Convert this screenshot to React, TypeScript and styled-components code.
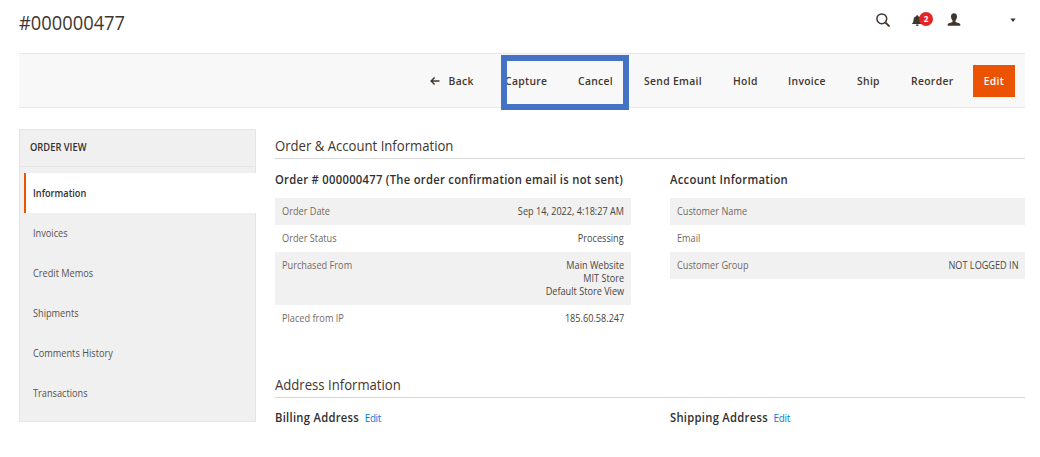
import React from "react";
import styled, { createGlobalStyle } from "styled-components";

const Global = createGlobalStyle`
  * { box-sizing: border-box; }
  body { margin: 0; background: #fff; color: #41362f; font-family: "Open Sans", sans-serif; font-size: 10px; }
  h1, h2, h3, dl, dd, dt { margin: 0; }
`;

const Page = styled.div`
  width: 1040px;
  height: 457px;
  padding: 0 15px 0 19px;
  overflow: hidden;
  white-space: nowrap;
`;

/* Horizontally condensed run of text, anchored at the given edge. */
const Condensed = styled.span<{ $by: number; $from?: string }>`
  display: inline-block;
  transform: scaleX(${(p) => p.$by});
  transform-origin: ${(p) => p.$from ?? "left"} center;
`;

const Header = styled.header`
  display: flex;
  justify-content: space-between;
  height: 53px;
`;

const Title = styled.h1`
  padding-top: 8px;
  font-size: 20.5px;
  line-height: 28px;
  font-weight: 400;
`;

const Tools = styled.div`
  display: flex;
  padding-top: 13px;
  width: 149px;
  svg { display: block; }
`;

const ToolIcon = styled.div<{ $gap: number }>`
  position: relative;
  width: 14px;
  height: 14px;
  margin-right: ${(p) => p.$gap}px;
`;

const Count = styled.span`
  position: absolute;
  left: 8px;
  top: -1px;
  width: 14px;
  height: 14px;
  border-radius: 7px;
  background: #e22626;
  color: #fff;
  font-size: 8px;
  line-height: 14px;
  font-weight: 700;
  text-align: center;
`;

const Toolbar = styled.div`
  position: relative;
  display: flex;
  align-items: center;
  justify-content: flex-end;
  height: 55px;
  padding-right: 10px;
  background: #f8f8f8;
  border-top: 1px solid #e9e9e9;
  border-bottom: 1px solid #e9e9e9;
`;

const Action = styled.button<{ $w: number }>`
  display: flex;
  align-items: center;
  justify-content: space-between;
  width: ${(p) => p.$w}px;
  margin: 0 31px 0 0;
  padding: 0;
  border: 0;
  background: none;
  position: relative;
  color: #41362f;
  font: 600 11px/16px "Open Sans", sans-serif;
  letter-spacing: 0.35px;
  white-space: nowrap;
`;

const Primary = styled(Action)`
  justify-content: center;
  height: 32px;
  margin: 0 0 0 -11px;
  background: #eb5202;
  color: #fff;
`;

const Highlight = styled.div`
  position: absolute;
  left: 482px;
  top: 1px;
  width: 128px;
  height: 55px;
  border: 6px solid #4472c4;
`;

const Body = styled.div`
  display: flex;
  gap: 19px;
  padding-top: 21px;
`;

const Side = styled.nav`
  width: 237px;
  height: 293px;
  background: #f0f0f0;
  border: 1px solid #e5e5e5;
`;

const SideTitle = styled.div`
  height: 37px;
  padding-left: 10px;
  border-bottom: 1px solid #e6e6e6;
  margin-bottom: 6px;
  color: #303030;
  font-size: 10.5px;
  line-height: 35px;
  font-weight: 600;
`;

const SideItem = styled.a<{ $active?: boolean }>`
  display: block;
  height: 40px;
  margin: 0 -1px 0 4px;
  padding-left: ${(p) => (p.$active ? 7 : 9)}px;
  border-left: ${(p) => (p.$active ? "2px solid #eb5202" : "0")};
  background: ${(p) => (p.$active ? "#fff" : "transparent")};
  color: ${(p) => (p.$active ? "#303030" : "#55504c")};
  font-weight: ${(p) => (p.$active ? 600 : 400)};
  font-size: 10.5px;
  line-height: 40px;
`;

const Main = styled.main`
  width: 750px;
`;

const Section = styled.section<{ $h: number }>`
  height: ${(p) => p.$h}px;
`;

const SectionTitle = styled.h2`
  height: 30px;
  padding-top: 6px;
  border-bottom: 1px solid #d6d6d6;
  font-size: 14.5px;
  line-height: 22px;
  font-weight: 400;
`;

const Columns = styled.div`
  display: grid;
  grid-template-columns: 356px 355px;
  gap: 39px;
`;

const Subtitle = styled.h3<{ $top?: number }>`
  height: 39px;
  padding-top: ${(p) => p.$top ?? 12}px;
  font-size: 12px;
  line-height: 18px;
  font-weight: 600;
  letter-spacing: 0.3px;
  color: #303030;
`;

const EditLink = styled.a`
  margin-left: 6px;
  color: #007bdb;
  font-size: 10.5px;
  font-weight: 400;
  letter-spacing: -0.3px;
`;

const Row = styled.div<{ $shade?: boolean; $right: number }>`
  display: flex;
  justify-content: space-between;
  padding: 7px ${(p) => p.$right}px 7px 7px;
  background: ${(p) => (p.$shade ? "#f1f1f1" : "#fff")};
  line-height: 13px;
  font-size: 10.5px;
`;

const Label = styled.dt`
  color: #736963;
  transform: scaleX(0.875);
  transform-origin: left center;
`;

const Value = styled.dd`
  text-align: right;
  color: #4a4542;
  transform: scaleX(0.87);
  transform-origin: right center;
`;

const SearchIcon = () => (
  <svg width="14" height="14" viewBox="0 0 14 14" fill="none" stroke="#41362f">
    <circle cx="5.8" cy="5.8" r="4.9" strokeWidth="1.5" />
    <path d="M9.3 9.3 13.5 13.5" strokeWidth="1.9" />
  </svg>
);

const BellIcon = () => (
  <svg width="14" height="14" viewBox="0 0 14 14" fill="#41362f">
    <path d="M6.2 2.300c.7 0 1 .4 1 .9 1.900.5 2.700 1.900 2.700 3.700 0 2 .6 3 1.600 4.100H.7c1-1.100 1.800-2.100 1.800-4.100 0-1.800.9-3.200 2.700-3.700 0-.5.3-.9 1-.9zM4.900 11.500h2.800c0 .9-.5 1.500-1.400 1.500s-1.400-.6-1.400-1.500z" />
  </svg>
);

const UserIcon = () => (
  <svg width="14" height="14" viewBox="0 0 14 14" fill="#41362f">
    <path d="M7 .2c1.900 0 3 1.200 3 3.300 0 1.500-.5 3-1.500 3.900v1.700c1.500.8 4.500 1 4.800 2.100v1.600H.7v-1.600c.3-1.100 3.300-1.300 4.800-2.100V7.400C4.500 6.500 4 5 4 3.500 4 1.400 5.100.2 7 .2z" />
  </svg>
);

const CaretIcon = () => (
  <svg width="6" height="14" viewBox="0 0 6 14" fill="#303030">
    <path d="M.4 5.500h5.200L3 9z" />
  </svg>
);

const BackIcon = () => (
  <svg width="10" height="10" viewBox="0 0 10 10" fill="none" stroke="#41362f" strokeWidth="1.4">
    <path d="M1 5h8.500M4.600 1.500 1.100 5l3.500 3.500" />
  </svg>
);

const actions: [string, number][] = [
  ["Capture", 42], ["Cancel", 35], ["Send Email", 58], ["Hold", 24], ["Invoice", 38], ["Ship", 23], ["Reorder", 42],
];

const sideItems = ["Information", "Invoices", "Credit Memos", "Shipments", "Comments History", "Transactions"];

const orderRows: [string, string[]][] = [
  ["Order Date", ["Sep 14, 2022, 4:18:27 AM"]],
  ["Order Status", ["Processing"]],
  ["Purchased From", ["Main Website", "MIT Store", "Default Store View"]],
  ["Placed from IP", ["185.60.58.247"]],
];

const accountRows: [string, string[]][] = [
  ["Customer Name", []],
  ["Email", []],
  ["Customer Group", ["NOT LOGGED IN"]],
];

const InfoTable = ({ rows, right = 7 }: { rows: [string, string[]][]; right?: number }) => (
  <dl>
    {rows.map(([label, lines], i) => (
      <Row key={label} $shade={i % 2 === 0} $right={right}>
        <Label>{label}</Label>
        <Value>{lines.map((line) => <div key={line}>{line}</div>)}</Value>
      </Row>
    ))}
  </dl>
);

export default function App() {
  return (
    <Page>
      <Global />
      <Header>
        <Title><Condensed $by={0.893}>#000000477</Condensed></Title>
        <Tools>
          <ToolIcon $gap={21}><SearchIcon /></ToolIcon>
          <ToolIcon $gap={22}><BellIcon /><Count>2</Count></ToolIcon>
          <ToolIcon $gap={49}><UserIcon /></ToolIcon>
          <CaretIcon />
        </Tools>
      </Header>
      <Toolbar>
        <Action $w={44}><BackIcon /><Condensed $by={0.94} $from="right">Back</Condensed></Action>
        {actions.map(([name, w]) => (
          <Action key={name} $w={w}><Condensed $by={0.94}>{name}</Condensed></Action>
        ))}
        <Primary $w={42}><Condensed $by={0.94} $from="center">Edit</Condensed></Primary>
        <Highlight />
      </Toolbar>
      <Body>
        <Side>
          <SideTitle><Condensed $by={0.89}>ORDER VIEW</Condensed></SideTitle>
          {sideItems.map((item, i) => (
            <SideItem key={item} $active={i === 0}><Condensed $by={0.875}>{item}</Condensed></SideItem>
          ))}
        </Side>
        <Main>
          <Section $h={239}>
            <SectionTitle><Condensed $by={0.905}>Order &amp; Account Information</Condensed></SectionTitle>
            <Columns>
              <div>
                <Subtitle>
                  <Condensed $by={0.936}>Order # 000000477 (The order confirmation email is not sent)</Condensed>
                </Subtitle>
                <InfoTable rows={orderRows} />
              </div>
              <div>
                <Subtitle><Condensed $by={0.94}>Account Information</Condensed></Subtitle>
                <InfoTable rows={accountRows} right={6} />
              </div>
            </Columns>
          </Section>
          <Section $h={80}>
            <SectionTitle><Condensed $by={0.905}>Address Information</Condensed></SectionTitle>
            <Columns>
              <Subtitle $top={11}><Condensed $by={0.936}>Billing Address<EditLink>Edit</EditLink></Condensed></Subtitle>
              <Subtitle $top={11}><Condensed $by={0.936}>Shipping Address<EditLink>Edit</EditLink></Condensed></Subtitle>
            </Columns>
          </Section>
        </Main>
      </Body>
    </Page>
  );
}
